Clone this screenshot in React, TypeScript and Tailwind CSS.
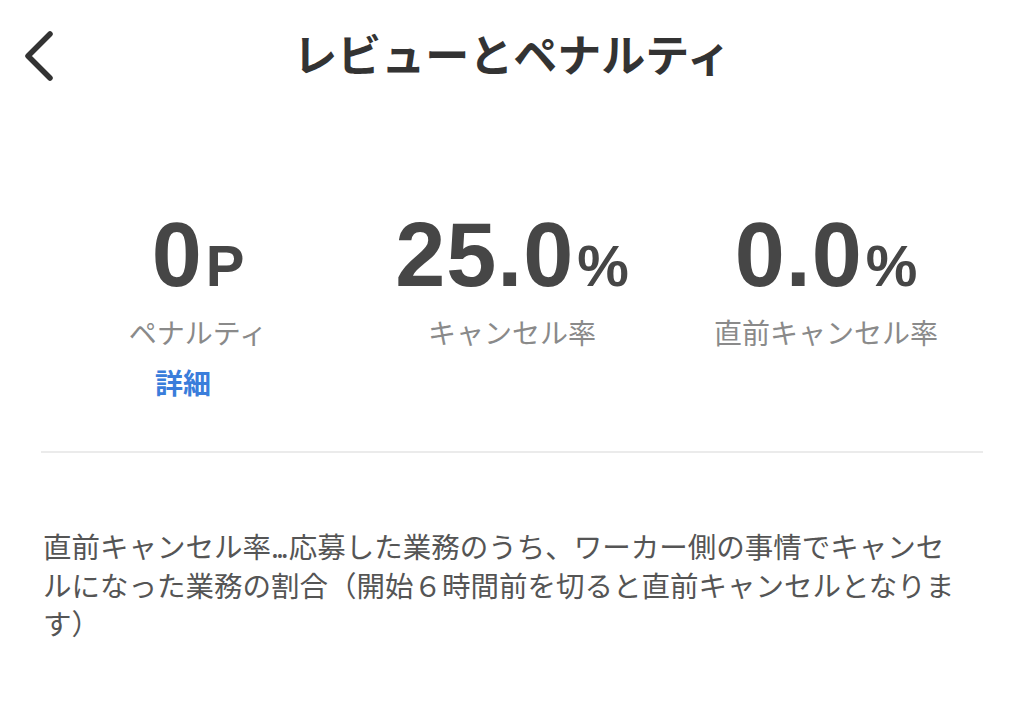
import React from 'react';

const jp = "font-['Noto_Sans_CJK_JP',sans-serif]";
const num = "font-['Liberation_Sans','Noto_Sans_CJK_JP',sans-serif]";

function Stat({
    value,
    unit,
    label,
    link,
}: {
    value: string;
    unit: string;
    label: string;
    link?: string;
}) {
    return (
        <div className="flex flex-col items-center">
            <div
                className={`${num} flex items-baseline justify-center h-[84px] font-bold text-[#464646] leading-none`}
            >
                <span className="text-[90px] tracking-[1px]">{value}</span>
                <span className="text-[58px] ml-[3px]">{unit}</span>
            </div>
            <div
                className={`${jp} mt-[18px] text-[28px] leading-[40px] text-[#8a8a8a] whitespace-nowrap`}
            >
                {label}
            </div>
            {link && (
                <button
                    className={`${jp} mt-[10px] mr-[30px] text-[28px] leading-[40px] font-bold text-[#3a7ddb]`}
                >
                    {link}
                </button>
            )}
        </div>
    );
}

export default function App() {
    return (
        <div className="w-[1024px] h-[715px] bg-white overflow-hidden">
            <header className="grid grid-cols-[100px_1fr_100px] items-center h-[106px]">
                <button className="pl-[22px] h-full flex items-center">
                    <svg width="40" height="56" viewBox="0 0 40 56">
                        <path
                            d="M28 9 L6 31 L28 53"
                            fill="none"
                            stroke="#333"
                            strokeWidth="5.5"
                            strokeLinecap="round"
                            strokeLinejoin="round"
                        />
                    </svg>
                </button>
                <h1
                    className={`${jp} text-center text-[44px] font-bold text-[#333] leading-none`}
                >
                    レビューとペナルティ
                </h1>
                <div />
            </header>

            <section className="px-[41px]">
                <div className="grid grid-cols-3 pt-[104px] h-[345px]">
                    <Stat value="0" unit="P" label="ペナルティ" link="詳細" />
                    <Stat value="25.0" unit="%" label="キャンセル率" />
                    <Stat value="0.0" unit="%" label="直前キャンセル率" />
                </div>
                <hr className="border-0 h-[2px] bg-[#ebebeb]" />
            </section>

            <p
                className={`${jp} mt-[74px] ml-[43px] w-[950px] text-[28.5px] leading-[38.5px] text-[#555] whitespace-nowrap`}
            >
                直前キャンセル率<span className="tracking-[-3px] mr-[3px]">...</span>応募した業務のうち、ワーカー側の事情でキャンセ
                <br />
                ルになった業務の割合（開始６時間前を切ると直前キャンセルとなりま
                <br />
                す）
            </p>
        </div>
    );
}
